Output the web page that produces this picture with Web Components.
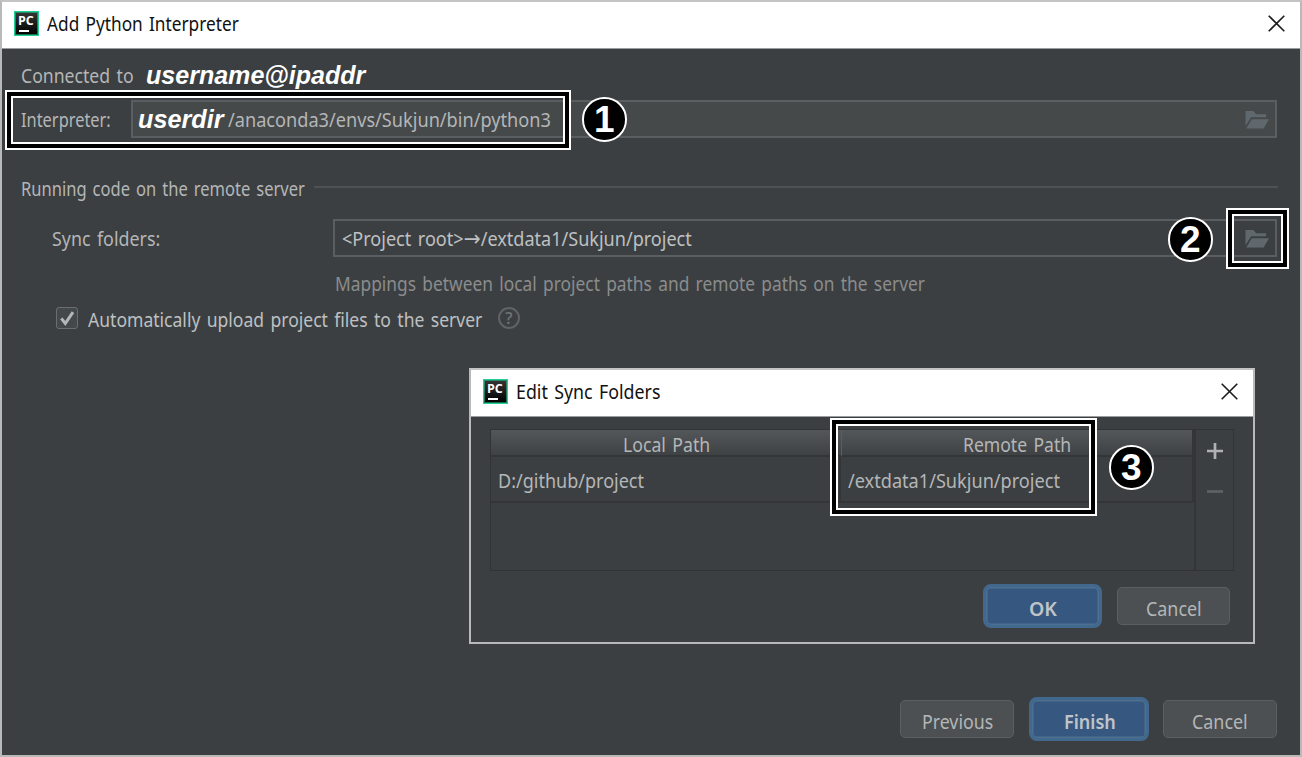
<!DOCTYPE html>
<html lang="en">
<head>
<meta charset="utf-8">
<title>Add Python Interpreter</title>
<style>
html,body{margin:0;padding:0;width:1302px;height:757px;overflow:hidden;background:#3c3f41}
body{position:relative;font-family:"Noto Sans","Open Sans",sans-serif;font-size:19.5px;color:#b4b6b7}
.row{display:flex;align-items:center;box-sizing:border-box}
.main{display:flex;flex-direction:column;height:706px}
.rule{height:2px;background:#4e5153;flex:1;margin:0 22px 4px 9px}
.popup{position:absolute;left:469px;top:368px}
.ann{position:absolute}
.arrow{font:22px/20px "DejaVu Sans",sans-serif}
</style>
</head>
<body>
<app-window style="width:1302px;height:757px">
  <fit-text slot="title" w="192" style="color:#111">Add Python Interpreter</fit-text>
  <div class="main">
    <div class="row" style="height:27px;margin-top:13px;padding-left:19px">
      <fit-text w="113">Connected to</fit-text>
      <fit-text w="219" ital style="margin:-2px 0 0 12px">username@ipaddr</fit-text>
    </div>
    <div class="row" style="height:38px;margin-top:11px;padding:0 23px 0 19px">
      <fit-text w="90" style="margin-top:1px">Interpreter:</fit-text>
      <path-field style="flex:1;margin-left:20px;--bg:#45494a;height:38px">
        <fit-text w="85" ital style="margin-left:5px">userdir</fit-text>
        <fit-text w="323" style="margin:2px 0 0 5px">/anaconda3/envs/Sukjun/bin/python3</fit-text>
      </path-field>
    </div>
    <div class="row" style="height:26px;margin-top:38px;padding-left:19px">
      <fit-text w="284">Running code on the remote server</fit-text><div class="rule"></div>
    </div>
    <div class="row" style="height:38px;margin-top:17px;padding:0 23px 0 50px">
      <fit-text w="108" style="margin-top:1px">Sync folders:</fit-text>
      <path-field style="flex:1;margin-left:173px;--bg:#3c3f41;height:38px">
        <fit-text w="350" style="margin:1px 0 0 7px;color:#bec0c1">&lt;Project root&gt;<span class="arrow">→</span>/extdata1/Sukjun/project</fit-text>
      </path-field>
    </div>
    <div class="row" style="height:26px;margin-top:14px;padding-left:333px">
      <fit-text w="590" style="color:#8a8c8d">Mappings between local project paths and remote paths on the server</fit-text>
    </div>
    <div class="row" style="height:26px;margin-top:9px;padding-left:54px">
      <check-mark style="margin-bottom:2px"></check-mark>
      <fit-text w="394" style="margin:1px 16px 0 10px;color:#bec0c1">Automatically upload project files to the server</fit-text>
      <help-icon style="margin-bottom:2px"></help-icon>
    </div>
    <div class="row" style="margin-top:auto;margin-bottom:14px;padding-right:23px;justify-content:flex-end">
      <push-button style="width:114px"><fit-text w="71">Previous</fit-text></push-button>
      <push-button primary style="width:120px;margin:0 14px 0 15px"><fit-text w="50">Finish</fit-text></push-button>
      <push-button style="width:114px"><fit-text w="56">Cancel</fit-text></push-button>
    </div>
  </div>
</app-window>

<app-window class="popup" style="width:786px;height:276px">
  <fit-text slot="title" w="144" style="color:#111">Edit Sync Folders</fit-text>
  <sync-table style="margin:12px 19px 0"></sync-table>
  <div class="row" style="margin-top:13px;padding-right:23px;justify-content:flex-end">
    <push-button primary style="width:119px;margin-right:15px"><fit-text w="27">OK</fit-text></push-button>
    <push-button style="width:113px"><fit-text w="56">Cancel</fit-text></push-button>
  </div>
</app-window>

<mark-frame class="ann" style="left:5px;top:90px;width:566px;height:60px"></mark-frame>
<mark-frame class="ann" style="left:1226px;top:208px;width:63px;height:61px"></mark-frame>
<mark-frame class="ann" style="left:830px;top:418px;width:267px;height:98px"></mark-frame>
<step-badge class="ann" style="left:582px;top:97px">1</step-badge>
<step-badge class="ann" style="left:1168px;top:217px">2</step-badge>
<step-badge class="ann" style="left:1109px;top:445px">3</step-badge>

<script>
function define(name, html, ready) {
  customElements.define(name, class extends HTMLElement {
    constructor() {
      super();
      this.attachShadow({mode: 'open'}).innerHTML = html;
    }
    connectedCallback() { if (ready) ready(this, this.shadowRoot); }
  });
}

// A single line of text condensed to a given width.
define('fit-text', `<style>
:host{display:block;flex:none;height:24px;line-height:24px;white-space:pre}
span{display:inline-block;transform-origin:0 0;white-space:pre;word-spacing:2px;line-height:24px}
:host([ital]){color:#fff}
:host([ital]) span{font:italic bold 25.5px/24px "Liberation Sans",Arial,sans-serif}
</style><span><slot></slot></span>`, (el, root) => {
  const w = +el.getAttribute('w');
  el.style.width = w + 'px';
  const s = root.querySelector('span');
  s.style.transform = 'scaleX(' + w / s.offsetWidth + ')';
});

define('app-logo', `<style>
:host{display:block;width:25px;height:25px;box-sizing:border-box;border:1px solid #21d293;background:linear-gradient(#363636,#000);box-shadow:inset 0 0 0 1px rgba(33,210,147,.55);flex:none}
b{display:block;font:bold 12.5px/13px "Open Sans","Noto Sans",sans-serif;color:#fff;margin:2px 0 0 3px;height:14px}
i{display:block;width:10px;height:2px;background:#fff;margin:2px 0 0 4px}
</style><b>PC</b><i></i>`);

define('app-window', `<style>
:host{display:block;box-sizing:border-box;background:#3c3f41;border:2px solid #b9b9b9;border-color:#c4c4c4 #b9b9b9 #b9b9b9 #b9b9b9}
header{display:flex;align-items:center;height:47px;box-sizing:border-box;background:#fff;border-bottom:1px solid #9a9c9d;padding:0 15px 3px 12px}
app-logo{margin-right:8px}
svg{margin:-1px 0 0 auto}
</style><header><app-logo></app-logo><slot name="title"></slot>
<svg width="17" height="17" viewBox="0 0 17 17"><path d="M.7.7l15.6 15.6M16.3.7L.7 16.3" stroke="#1c1c1c" stroke-width="1.6" fill="none"/></svg></header><slot></slot>`);

define('path-field', `<style>
:host{display:flex;align-items:center;box-sizing:border-box;border:2px solid #5b5e60;background:var(--bg)}
svg{margin:1px 6px 0 auto}
</style><slot></slot><svg width="24" height="18" viewBox="0 0 24 18" fill="#5f696d"><path d="M.5 0h7.8l2.8 3.3h10v3H6.2L.5 15z"/><path d="M6.8 8.2H24l-5.4 9.3H1.2z"/></svg>`);

define('check-mark', `<style>
:host{display:block;width:22px;height:22px;box-sizing:border-box;border:1.5px solid #6b6e70;border-radius:3px;background:#43494a}
svg{display:block}
</style><svg width="20" height="20" viewBox="0 0 20 20"><path d="M4.3 10.3l4 5.2L16 4.2" fill="none" stroke="#b4b6b7" stroke-width="3"/></svg>`);

define('help-icon', `<style>
:host{display:flex;align-items:center;justify-content:center;width:22px;height:22px;box-sizing:border-box;border:2px solid #606365;border-radius:50%;font:600 16px/18px "Open Sans",sans-serif;color:#707375}
</style>?`);

define('push-button', `<style>
:host{display:flex;align-items:center;justify-content:center;height:38px;box-sizing:border-box;border:1.5px solid #5c5f60;border-radius:5px;background:#4c5052;color:#b4b6b7;padding-top:5px}
:host([primary]){height:44px;border:3px solid #43688e;border-radius:8px;background:#365880;box-shadow:inset 0 0 0 1.5px #4c708f;font-weight:600;color:#c0c4c8}
</style><slot></slot>`);

define('sync-table', `<style>
:host{display:grid;grid-template-columns:1fr 39px;height:142px;box-sizing:border-box;border:1px solid #313335}
.grid{display:grid;grid-template-columns:350px 1fr;grid-template-rows:27px 46px 1fr}
.h{display:flex;justify-content:center;align-items:center;background:linear-gradient(#545759,#3f4244);border-bottom:2px solid #333537;box-sizing:border-box;padding-top:5px}
.h + .h{border-left:1px solid #5b5e60;border-right:2px solid #333537}
.c{display:flex;align-items:center;padding:3px 0 0 7px;border-bottom:2px solid #333537;border-right:2px solid #333537;box-sizing:border-box}
.tools{border-left:2px solid #333537;display:flex;flex-direction:column;align-items:center;padding-top:13px}
svg{display:block}
</style><div class="grid">
<div class="h"><fit-text w="87">Local Path</fit-text></div><div class="h"><fit-text w="108">Remote Path</fit-text></div>
<div class="c"><fit-text w="146">D:/github/project</fit-text></div><div class="c"><fit-text w="212">/extdata1/Sukjun/project</fit-text></div>
</div><div class="tools"><svg width="16" height="52" viewBox="0 0 16 52"><path d="M8 0v16M0 8h16" stroke="#afb1b3" stroke-width="2.7"/><path d="M0 48.5h16" stroke="#5f6264" stroke-width="2.7"/></svg></div>`);

define('mark-frame', `<style>
:host{display:block;box-sizing:border-box;border:2px solid #fff}
div{height:100%;box-sizing:border-box;border:4px solid #000}
p{margin:0;height:100%;box-sizing:border-box;border:2px solid #fff}
</style><div><p></p></div>`);

define('step-badge', `<style>
:host{display:flex;align-items:center;justify-content:center;width:44.5px;height:44.5px;box-sizing:border-box;border:2px solid #fff;border-radius:50%;background:#000;color:#fff;font:bold 37px/41px "Liberation Sans",Arial,sans-serif}
</style><slot></slot>`);
</script>
</body>
</html>
